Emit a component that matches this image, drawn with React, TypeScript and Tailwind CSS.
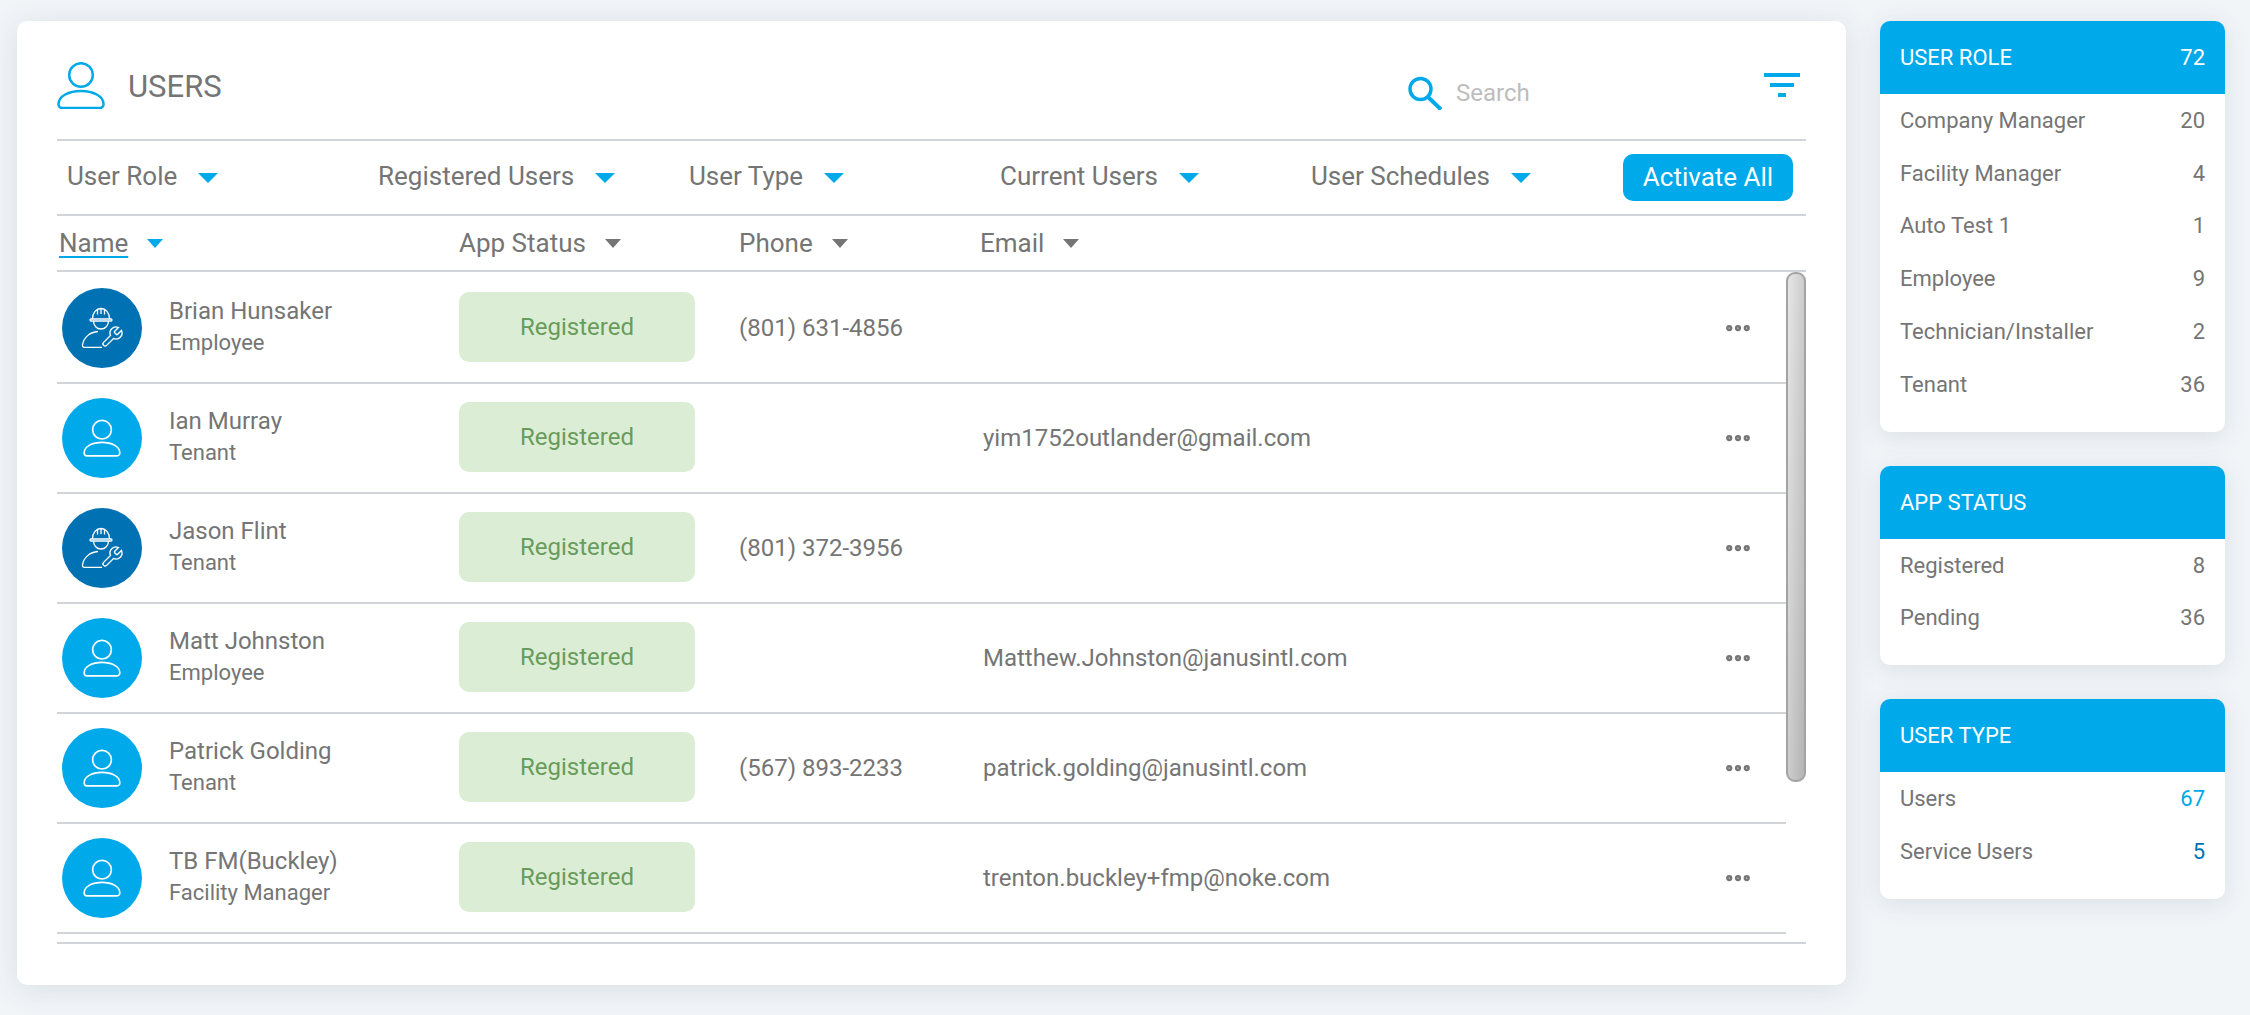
import { MoreHorizontal } from "lucide-react";

type User = {
  name: string;
  role: string;
  phone?: string;
  email?: string;
  service?: boolean;
};

const users: User[] = [
  { name: "Brian Hunsaker", role: "Employee", phone: "(801) 631-4856", service: true },
  { name: "Ian Murray", role: "Tenant", email: "yim1752outlander@gmail.com" },
  { name: "Jason Flint", role: "Tenant", phone: "(801) 372-3956", service: true },
  { name: "Matt Johnston", role: "Employee", email: "Matthew.Johnston@janusintl.com" },
  { name: "Patrick Golding", role: "Tenant", phone: "(567) 893-2233", email: "patrick.golding@janusintl.com" },
  { name: "TB FM(Buckley)", role: "Facility Manager", email: "trenton.buckley+fmp@noke.com" },
];

const filters = ["User Role", "Registered Users", "User Type", "Current Users", "User Schedules"];

type Stat = { label: string; count: number; color?: string };

const panels: { title: string; total?: number; rows: Stat[] }[] = [
  {
    title: "USER ROLE",
    total: 72,
    rows: [
      { label: "Company Manager", count: 20 },
      { label: "Facility Manager", count: 4 },
      { label: "Auto Test 1", count: 1 },
      { label: "Employee", count: 9 },
      { label: "Technician/Installer", count: 2 },
      { label: "Tenant", count: 36 },
    ],
  },
  {
    title: "APP STATUS",
    rows: [
      { label: "Registered", count: 8 },
      { label: "Pending", count: 36 },
    ],
  },
  {
    title: "USER TYPE",
    rows: [
      { label: "Users", count: 67, color: "text-[#00a9e9]" },
      { label: "Service Users", count: 5, color: "text-[#0071b2]" },
    ],
  },
];

function PersonIcon({ className, strokeWidth }: { className: string; strokeWidth: number }) {
  return (
    <svg viewBox="0 0 48 47" fill="none" stroke="currentColor" strokeWidth={strokeWidth} className={className}>
      <circle cx="24" cy="13" r="11.8" />
      <path d="M5 46h38a3.5 3.5 0 0 0 3.5-3.5v-.5C46.5 34 36 29 24 29S1.500 34 1.500 42v.5A3.500 3.500 0 0 0 5 46z" />
    </svg>
  );
}

function WorkerIcon() {
  return (
    <svg viewBox="0 0 80 80" fill="none" stroke="white" strokeWidth="1.3" className="w-20 h-20">
      <path d="M30.500 31c0-6.500 3.800-10.500 8.500-10.500s8.500 4 8.500 10.500" />
      <path d="M35.500 22v4.500M39 20.500v5.500M42.500 22v4.500" />
      <rect x="28" y="31" width="22" height="2" rx="1" />
      <path d="M31.500 33c0 4.500 3.300 8 7.500 8s7.500-3.500 7.500-8" />
      <path d="M36 43.500c-8 .5-14.500 6-15.500 13.500-.2 1.300.5 2.300 1.800 2.300H40" />
      <g transform="translate(38 37)" strokeWidth="1.400">
        <path d="M14.700 6.300a1 1 0 0 0 0 1.400l1.600 1.600a1 1 0 0 0 1.400 0l3.770-3.770a6 6 0 0 1-7.940 7.940l-6.910 6.910a2.120 2.120 0 0 1-3-3l6.910-6.910a6 6 0 0 1 7.940-7.940l-3.760 3.760z" />
      </g>
    </svg>
  );
}

function Caret({ gray }: { gray?: boolean }) {
  return (
    <span
      className={
        gray
          ? "w-0 h-0 border-x-8 border-x-transparent border-t-[9px] border-t-[#757575]"
          : "w-0 h-0 border-x-8 border-x-transparent border-t-[9px] border-t-[#00a9e9]"
      }
    />
  );
}

function UserRow({ user }: { user: User }) {
  return (
    <div className="grid grid-cols-[402px_280px_244px_1fr_63px] items-center h-[110px] border-b-2 border-[#d1d5d9]">
      <div className="flex items-center pl-[5px]">
        <div
          className={
            user.service
              ? "w-20 h-20 rounded-full bg-[#0071b2] flex items-center justify-center"
              : "w-20 h-20 rounded-full bg-[#00a9e9] flex items-center justify-center text-white"
          }
        >
          {user.service ? <WorkerIcon /> : <PersonIcon className="w-[38px] h-[38px]" strokeWidth={2.1} />}
        </div>
        <div className="ml-[27px] mb-[2px] flex flex-col">
          <span className="text-[24px] leading-[32px]">{user.name}</span>
          <span className="text-[22px] leading-[32px]">{user.role}</span>
        </div>
      </div>
      <div className="w-[236px] h-[70px] mb-[2px] rounded-[10px] bg-[#dcedd5] text-[#689c5c] flex items-center justify-center text-[24px]">
        Registered
      </div>
      <span className="text-[24px]">{user.phone}</span>
      <span className="text-[24px]">{user.email}</span>
      <MoreHorizontal className="w-[30px] h-[30px] text-[#757575]" strokeWidth={3} />
    </div>
  );
}

export default function App() {
  return (
    <div className="w-[2250px] h-[1015px] overflow-hidden bg-[#f1f5f8] flex items-start pt-[21px] pl-[17px] font-['Roboto',sans-serif] text-[#757575]">
      <div className="w-[1829px] h-[964px] bg-white rounded-[10px] shadow-[0_4px_30px_rgba(60,80,100,0.13)] px-[40px] flex flex-col">
        <div className="h-[118px] flex items-start relative">
          <div className="flex items-center mt-[41px]">
            <PersonIcon className="w-12 h-[47px] text-[#00a9e9]" strokeWidth={2.5} />
            <span className="ml-[23px] text-[31px] leading-[36px] mt-[2px]">USERS</span>
          </div>
          <div className="ml-auto flex items-center mt-[54px]">
            <svg viewBox="0 0 34 34" fill="none" stroke="#00a9e9" className="w-[34px] h-[34px]">
              <circle cx="12.500" cy="13" r="10.500" strokeWidth="3.500" />
              <path d="M20 21l13 12.500" strokeWidth="4" />
            </svg>
            <span className="ml-[14px] w-[308px] text-[24px] text-[#bdbdbd]">Search</span>
          </div>
          <div className="flex flex-col items-center gap-[6px] mt-[52px] mr-[6px]">
            <span className="w-9 h-1 bg-[#00a9e9]" />
            <span className="w-6 h-1 bg-[#00a9e9]" />
            <span className="w-2 h-1 bg-[#00a9e9]" />
          </div>
        </div>

        <div className="h-[77px] border-y-2 border-[#d1d5d9] flex items-center">
          {filters.map((f) => (
            <div key={f} className="w-[311px] shrink-0 pl-[10px] flex items-center">
              <span className="text-[26px] -mt-[2px]">{f}</span>
              <span className="ml-[21px] w-0 h-0 border-x-[10px] border-x-transparent border-t-[10px] border-t-[#00a9e9]" />
            </div>
          ))}
          <button className="w-[170px] h-[47px] ml-[11px] rounded-[10px] bg-[#00a9e9] text-white text-[26px]">
            Activate All
          </button>
        </div>

        <div className="h-[56px] border-b-2 border-[#d1d5d9] grid grid-cols-[402px_280px_241px_1fr] items-center text-[26px]">
          <div className="flex items-center pl-[2px] gap-[19px]">
            <span className="underline decoration-[#00a9e9] decoration-2 underline-offset-4">Name</span>
            <Caret />
          </div>
          <div className="flex items-center gap-[19px]">
            <span>App Status</span>
            <Caret gray />
          </div>
          <div className="flex items-center gap-[19px]">
            <span>Phone</span>
            <Caret gray />
          </div>
          <div className="flex items-center gap-[19px]">
            <span>Email</span>
            <Caret gray />
          </div>
        </div>

        <div className="relative pt-[2px] pr-[20px]">
          {users.map((u) => (
            <UserRow key={u.name} user={u} />
          ))}
          <div className="absolute right-0 top-0 w-5 h-[510px] rounded-[9px] border-2 border-[#a3a3a3] bg-gradient-to-br from-[#e6e6e6] to-[#b4b4b4]" />
        </div>

        <div className="mt-2 border-b-2 border-[#d1d5d9]" />
      </div>

      <div className="ml-[34px] w-[345px] flex flex-col gap-[34px]">
        {panels.map((p) => (
          <div key={p.title} className="rounded-[10px] bg-white shadow-[0_4px_24px_rgba(60,80,100,0.13)] overflow-hidden">
            <div className="h-[73px] bg-[#00a9e9] px-5 flex items-center justify-between text-white text-[22px]">
              <span>{p.title}</span>
              {p.total !== undefined && <span>{p.total}</span>}
            </div>
            <div className="pb-[21px]">
              {p.rows.map((r) => (
                <div key={r.label} className="h-[52.8px] px-5 flex items-center justify-between text-[22px]">
                  <span>{r.label}</span>
                  <span className={r.color}>{r.count}</span>
                </div>
              ))}
            </div>
          </div>
        ))}
      </div>
    </div>
  );
}
